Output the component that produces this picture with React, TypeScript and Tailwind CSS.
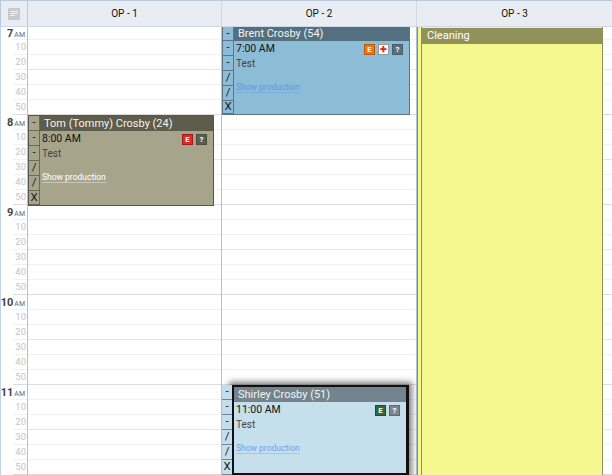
import React from "react";

const font = { fontFamily: '"Roboto", "Liberation Sans", sans-serif' };

function Badge({ children, cls }: { children: React.ReactNode; cls: string }) {
  return (
    <span className={`flex h-[11px] w-[11px] items-center justify-center border text-[8px] font-bold leading-none ${cls}`}>
      {children}
    </span>
  );
}

function Strip({ cls, short = false }: { cls: string; short?: boolean }) {
  const marks = ["-", "-", "-", "/", "/", "X"];
  return (
    <div className="relative z-10 flex w-[10px] shrink-0 flex-col overflow-hidden">
      {marks.map((m, i) => (
        <div
          key={i}
          className={`flex w-full shrink-0 items-center justify-center border-b text-[11.5px] leading-none text-[#222] ${short && i === 0 ? "h-[14px]" : "h-[15px]"} ${i === 5 ? "min-h-0 flex-1" : ""} ${cls}`}
        >
          {m}
        </div>
      ))}
    </div>
  );
}

function Body({
  time,
  badges,
  linkCls,
  name,
  headCls,
}: {
  time: string;
  badges: React.ReactNode;
  linkCls: string;
  name: string;
  headCls: string;
}) {
  return (
    <>
      <div className={`truncate pl-[4px] text-[11px] text-[#f4f4f0] ${headCls}`}>{name}</div>
      <div className="flex h-[15px] items-center justify-between pl-[2px] pr-[6px] pt-[2px] text-[10.5px] leading-none text-[#111]">
        <span>{time}</span>
        <span className="flex gap-[3px]">{badges}</span>
      </div>
      <div className="pl-[2px] pt-[1px] text-[10px] leading-[13px] text-[#444]">Test</div>
      <div className={`pl-[2px] pt-[11px] text-[8.5px] leading-[12px] ${linkCls}`}>
        <span className="border-b border-current/40">Show production</span>
      </div>
    </>
  );
}

function HourRows({ first }: { first?: boolean }) {
  const rows = [0, 1, 2, 3, 4, 5];
  return (
    <>
      {rows.map((r) => (
        <div
          key={r}
          className={`shrink-0 border-b ${r === 5 ? "border-[#dcdcdc]" : r === 2 ? "border-[#e6e6e6]" : "border-[#f1f1f1]"} ${first && r === 0 ? "h-[13px]" : "h-[15px]"}`}
        />
      ))}
    </>
  );
}

function TimeCol() {
  const hours = [
    ["7", true],
    ["8", false],
    ["9", false],
    ["10", false],
    ["11", false],
  ] as const;
  return (
    <div className="flex w-[28px] shrink-0 flex-col border-x border-l-[#c3d3e6] border-r-[#aac2dc] bg-white">
      {hours.map(([h, first]) => (
        <div key={h} className="flex shrink-0 flex-col">
          {["", "10", "20", "30", "40", "50"].map((m, i) => (
            <div
              key={i}
              className={`ml-[12px] flex shrink-0 items-center justify-end border-b pr-[1px] text-[9.5px] leading-none text-[#c4c4c4] ${i === 5 ? "border-[#dcdcdc]" : "border-[#f1f1f1]"} ${first && i === 0 ? "h-[13px]" : "h-[15px]"}`}
            >
              {i === 0 ? (
                <span className="-ml-[9px] mr-[1px] flex items-baseline gap-[1px] whitespace-nowrap text-[#444]">
                  <span className="text-[11px] font-bold">{h}</span>
                  <span className="text-[7px] text-[#666]">AM</span>
                </span>
              ) : (
                m
              )}
            </div>
          ))}
        </div>
      ))}
    </div>
  );
}

function Column({ children, border = true }: { children?: React.ReactNode; border?: boolean }) {
  return (
    <div className={`relative h-full ${border ? "border-r border-r-[#aac2dc]" : ""}`}>
      <HourRows first />
      <HourRows />
      <HourRows />
      <HourRows />
      <HourRows />
      {children}
    </div>
  );
}

export default function App() {
  return (
    <div className="flex h-[475px] w-[612px] flex-col overflow-hidden bg-white" style={font}>
      <div className="flex h-[27px] shrink-0 border-y border-b-[#cfd8e3] border-t-[#b8cade] bg-[#e9ecf2] text-[10px] text-[#111]">
        <div className="flex w-[28px] shrink-0 items-center justify-center border-x border-[#b8cade] bg-[#e9ecf2]">
          <span className="flex h-[12px] w-[12px] flex-col items-start justify-center gap-[1px] rounded-[1px] bg-[#c9c9c9] pl-[2px]">
            <i className="block h-px w-[8px] bg-[#f2f2f2]" />
            <i className="block h-px w-[8px] bg-[#f2f2f2]" />
            <i className="block h-px w-[5px] bg-[#f2f2f2]" />
          </span>
        </div>
        <div className="flex w-[194px] shrink-0 items-center justify-center border-r border-[#cfd8e3]">OP - 1</div>
        <div className="flex w-[195px] shrink-0 items-center justify-center border-r border-[#cfd8e3]">OP - 2</div>
        <div className="flex flex-1 items-center justify-center">OP - 3</div>
      </div>
      <div className="flex min-h-0 flex-1 overflow-hidden">
        <TimeCol />
        <div className="w-[194px] shrink-0">
          <Column>
            <div className="absolute left-0 top-[88px] flex h-[91px] w-[186px] border border-[#555] bg-[#a6a58b]">
              <Strip cls="border-[#6b6b55] bg-[#a6a58b]" />
              <div className="min-w-0 flex-1 border-l border-[#6b6b55]">
                <Body
                  name="Tom (Tommy) Crosby (24)"
                  headCls="h-[15px] leading-[15px] bg-[#5e5c4a]"
                  time="8:00 AM"
                  linkCls="text-white"
                  badges={
                    <>
                      <Badge cls="border-[#a81818] bg-[#d92b2b] text-white">E</Badge>
                      <Badge cls="border-[#4d4d42] bg-[#5c5c50] text-white">?</Badge>
                    </>
                  }
                />
              </div>
            </div>
          </Column>
        </div>
        <div className="w-[195px] shrink-0">
          <Column>
            <div className="absolute left-0 top-0 flex h-[88px] w-[188px] border border-t-0 border-[#5b7688] bg-[#8dbcd6]">
              <Strip short cls="border-[#5b7688] bg-[#8dbcd6]" />
              <div className="min-w-0 flex-1 border-l border-[#5b7688]">
                <Body
                  name="Brent Crosby (54)"
                  headCls="h-[14px] leading-[13px] bg-[#52707f]"
                  time="7:00 AM"
                  linkCls="text-[#5f97e8]"
                  badges={
                    <>
                      <Badge cls="border-[#b8590f] bg-[#ed7516] text-white">E</Badge>
                      <Badge cls="border-[#999] bg-white text-[#e8241a]">✚</Badge>
                      <Badge cls="border-[#4b5f6b] bg-[#5b6e7a] text-white">?</Badge>
                    </>
                  }
                />
              </div>
            </div>
            <div className="absolute left-0 top-[358px] flex h-[90px] w-[187px]">
              <Strip cls="border-[#6d8797] bg-[#c4deec]" />
              <div className="min-w-0 flex-1 border-2 border-r-[3px] border-[#111] bg-[#c6dfec] shadow-[0_0_6px_3px_rgba(0,0,0,0.5)]">
                <Body
                  name="Shirley Crosby (51)"
                  headCls="h-[15px] leading-[15px] bg-[#74848e]"
                  time="11:00 AM"
                  linkCls="text-[#6f9ff0]"
                  badges={
                    <>
                      <Badge cls="border-[#1f4f24] bg-[#2f6b35] text-white">E</Badge>
                      <Badge cls="border-[#666] bg-[#7d868c] text-white">?</Badge>
                    </>
                  }
                />
              </div>
            </div>
          </Column>
        </div>
        <div className="min-w-0 flex-1">
          <Column border={false}>
            <div className="absolute inset-y-0 left-0 right-[9px] flex border-x border-[#8f8f57] bg-[#f4f88f]">
              <div className="w-[4px] shrink-0 border-r border-[#8f8f57]" />
              <div className="min-w-0 flex-1">
                <div className="mt-[1px] h-[16px] bg-[#91915a] pl-[5px] text-[11px] leading-[16px] text-white">Cleaning</div>
              </div>
            </div>
          </Column>
        </div>
      </div>
    </div>
  );
}
